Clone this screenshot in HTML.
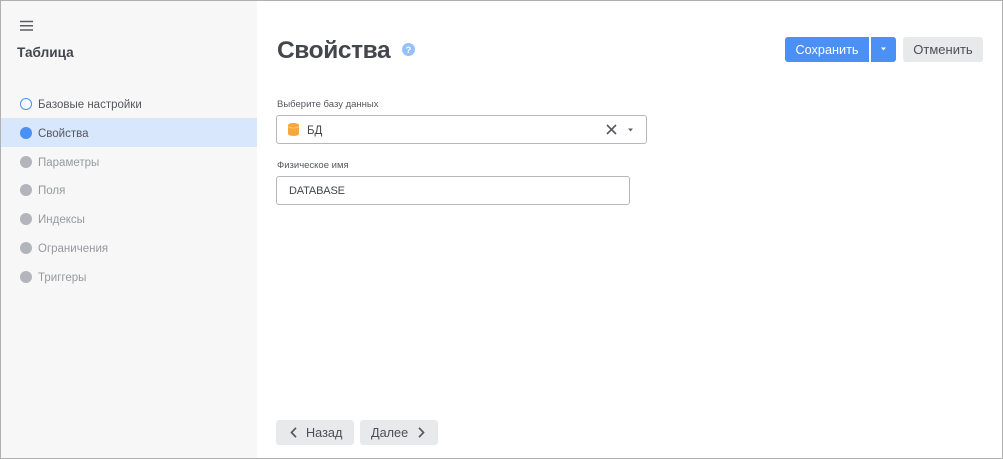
<!DOCTYPE html>
<html lang="ru"><head><meta charset="utf-8"><title>Таблица</title>
<style>
html,body{margin:0;padding:0;background:#fff}
#p{position:relative;width:1003px;height:459px;overflow:hidden;background:#fff;font-family:"Liberation Sans",Arial,sans-serif;color:#40444b}
#p div,#p span.t{position:absolute;white-space:nowrap}
.t{line-height:16px}
.side{left:1px;top:1px;width:256px;height:457px;background:#f7f7f7}
.sel{left:1px;top:118px;width:256px;height:29px;background:#d8e7fb}
.dot{left:20px;width:12px;height:12px;border-radius:50%;background:#b2b5bc}
.it{left:38px;font-size:11.5px;line-height:16px;color:#96999f}
.lbl{left:277px;font-size:9.5px;line-height:12px;color:#55585e}
.btn{border-radius:3px;background:#e8e9eb;height:25px}
.bt{font-size:12.7px;line-height:16px;color:#4b4f56}
.frame{left:0;top:0;width:1001px;height:457px;border:1px solid #b0b0b0;z-index:9}
svg{position:absolute;display:block}
</style></head><body>
<div id="p">
<div class="side"></div>
<div class="sel"></div>

<svg style="left:20px;top:20px" width="13" height="11" viewBox="0 0 13 11"><path d="M0 1.500h13M0 5.800h13M0 10h13" stroke="#5a5d62" stroke-width="1.500"/></svg>
<div class="t" style="left:17px;top:45px;font-size:13.6px;font-weight:bold;color:#43464c">Таблица</div>

<div class="dot" style="top:98px;background:#fff;border:1.200px solid #4a90f5;box-sizing:border-box"></div>
<div class="it" style="top:97px;color:#55585e">Базовые настройки</div>
<div class="dot" style="top:127px;background:#4a90f5"></div>
<div class="it" style="top:126px;color:#55585e">Свойства</div>
<div class="dot" style="top:156px"></div>
<div class="it" style="top:155px">Параметры</div>
<div class="dot" style="top:184px"></div>
<div class="it" style="top:183px">Поля</div>
<div class="dot" style="top:213px"></div>
<div class="it" style="top:212px">Индексы</div>
<div class="dot" style="top:242px"></div>
<div class="it" style="top:241px">Ограничения</div>
<div class="dot" style="top:271px"></div>
<div class="it" style="top:270px">Триггеры</div>

<div style="left:277px;top:35px;font-size:24.5px;line-height:32px;font-weight:bold;color:#43464c;letter-spacing:-.4px">Свойства</div>
<svg style="left:402px;top:43px" width="13" height="13" viewBox="0 0 13 13"><circle cx="6.500" cy="6.500" r="6.500" fill="#94c1f9"/><text x="6.500" y="10" text-anchor="middle" font-family="Liberation Sans" font-size="9.500" font-weight="bold" fill="#fff">?</text></svg>

<div class="btn" style="left:785px;top:37px;width:84px;background:#4a90f5;border-radius:3px 0 0 3px"></div>
<div class="bt" style="left:785px;top:42px;width:84px;text-align:center;color:#fff">Сохранить</div>
<div class="btn" style="left:871px;top:37px;width:25px;background:#4a90f5;border-radius:0 3px 3px 0"></div>
<svg style="left:881px;top:47px" width="5" height="4" viewBox="0 0 5 4"><path d="M0 .5h5L2.500 3.500z" fill="#fff"/></svg>
<div class="btn" style="left:903px;top:37px;width:80px"></div>
<div class="bt" style="left:903px;top:42px;width:80px;text-align:center;font-size:13px">Отменить</div>

<div class="lbl" style="top:99px">Выберите базу данных</div>
<div style="left:276px;top:115px;width:369px;height:27px;border:1px solid #b5b7bd;border-radius:3px;background:#fff"></div>
<svg style="left:288px;top:123px" width="11" height="13" viewBox="0 0 11 13"><path d="M0 2.200C0 .9 2.500 0 5.500 0S11 .9 11 2.200V10.800C11 12.100 8.500 13 5.500 13S0 12.100 0 10.800z" fill="#f6a93b"/><path d="M0 3.400C1.200 4.600 3.200 5 5.500 5S9.800 4.600 11 3.400" fill="none" stroke="#fbd9a6" stroke-width=".6"/></svg>
<div class="t" style="left:307px;top:123px;font-size:11.500px;color:#43464c">БД</div>
<svg style="left:606px;top:124px" width="11" height="11" viewBox="0 0 11 11"><path d="M1 1l9 9M10 1l-9 9" stroke="#55585e" stroke-width="1.600"/></svg>
<svg style="left:628px;top:128px" width="5" height="4" viewBox="0 0 5 4"><path d="M0 .5h5L2.500 3.500z" fill="#5f6267"/></svg>

<div class="lbl" style="top:160px">Физическое имя</div>
<div style="left:276px;top:176px;width:352px;height:27px;border:1px solid #b5b7bd;border-radius:3px;background:#fff"></div>
<div class="t" style="left:289px;top:183px;font-size:11px;color:#43464c;letter-spacing:-.15px">DATABASE</div>

<div class="btn" style="left:276px;top:420px;width:78px"></div>
<svg style="left:290px;top:427px" width="7" height="11" viewBox="0 0 7 11"><path d="M6 .8L1.500 5.500 6 10.200" fill="none" stroke="#55585e" stroke-width="1.700"/></svg>
<div class="bt" style="left:306px;top:425px">Назад</div>
<div class="btn" style="left:360px;top:420px;width:78px"></div>
<div class="bt" style="left:371px;top:425px">Далее</div>
<svg style="left:418px;top:427px" width="7" height="11" viewBox="0 0 7 11"><path d="M1 .8L5.500 5.500 1 10.200" fill="none" stroke="#55585e" stroke-width="1.700"/></svg>

<div class="frame"></div>
</div>
</body></html>
